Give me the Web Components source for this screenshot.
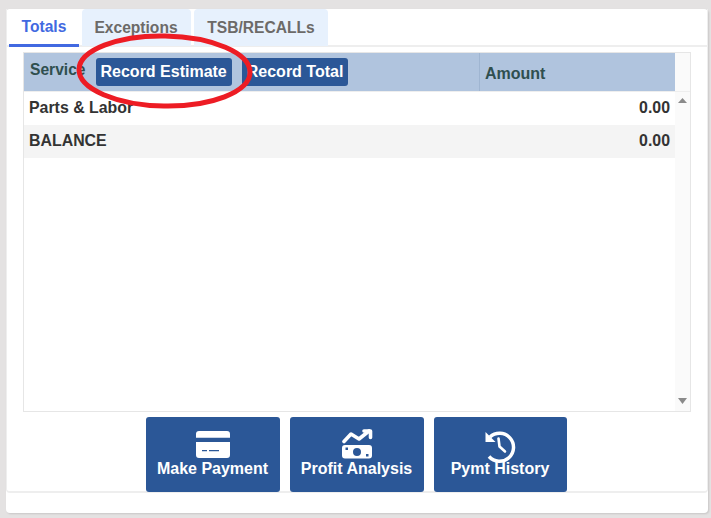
<!DOCTYPE html>
<html><head><meta charset="utf-8"><style>
html,body{margin:0;padding:0;background:#e4e2e2;height:518px;overflow:hidden;font-family:"Liberation Sans",Arial,sans-serif}
</style></head><body>
<app-panel></app-panel>
<script>
function def(name,html){customElements.define(name,class extends HTMLElement{constructor(){super();this.attachShadow({mode:'open'}).innerHTML=html}})}
def('tab-item',`<style>:host{display:flex;align-items:center;justify-content:center;box-sizing:border-box;height:37px;background:#e7f1fd;color:#6c6a68;font:bold 15.6px "Liberation Sans",Arial,sans-serif;border-radius:4px 4px 0 0}
:host([active]){background:#fff;color:#4169e1;border-bottom:3px solid #4169e1;height:38px;border-radius:0}</style><slot></slot>`);
def('tab-bar',`<style>:host{display:flex;gap:3px;padding-left:2px;height:38px;box-sizing:border-box;border-bottom:2px solid #eee}</style><slot></slot>`);
def('rec-button',`<style>:host{display:inline-flex;align-items:center;height:28px;box-sizing:border-box;padding:0 5px;background:#2b5797;color:#fff;font:bold 16px "Liberation Sans",Arial,sans-serif;border-radius:3px;white-space:nowrap}</style><slot></slot>`);
def('grid-head',`<style>:host{display:flex;height:38px;flex:none;border-bottom:1px solid #eee}
.main{flex:none;width:651px;display:grid;grid-template-columns:455px 1fr;background:#b0c4de;color:#2f4f4f;font:bold 15.6px "Liberation Sans",Arial,sans-serif}
.l{display:flex;align-items:center;padding-left:6px;gap:10px}
.l span{position:relative;top:-2px}
.btns{display:flex;gap:10px}
.r{border-left:1px solid #9fb5d1;padding-left:5px;display:flex;align-items:center;padding-top:3px;font-size:16px}
.sb{flex:1;background:#fafafa}</style>
<div class="main"><div class="l"><span>Service</span><div class="btns"><rec-button>Record Estimate</rec-button><rec-button>Record Total</rec-button></div></div><div class="r">Amount</div></div><div class="sb"></div>`);
def('grid-row',`<style>:host{display:flex;justify-content:space-between;align-items:center;box-sizing:border-box;height:33px;padding:0 5px 2px;color:#333;font:bold 15.9px "Liberation Sans",Arial,sans-serif}
:host([alt]){background:#f4f4f4}</style><slot name="k"></slot><slot name="v"></slot>`);
def('scroll-track',`<style>:host{display:flex;flex-direction:column;justify-content:space-between;align-items:center;width:15px;flex:none;background:#fafafa;padding:6px 0 7px;box-sizing:border-box}svg{display:block}</style>
<svg width="9" height="5" viewBox="0 0 9 5"><path d="M4.500 0L9 5H0z" fill="#8a8a8a"/></svg><svg width="9" height="6" viewBox="0 0 9 6"><path d="M0 0H9L4.500 6z" fill="#8a8a8a"/></svg>`);
def('data-grid',`<style>:host{display:flex;flex-direction:column;box-sizing:border-box;height:360px;margin:0 16px;border:1px solid #e6e6e6;background:#fff}
.body{flex:1;display:flex;min-height:0}.rows{flex:1;min-width:0}</style>
<grid-head></grid-head><div class="body"><div class="rows"><slot></slot></div><scroll-track></scroll-track></div>`);
def('action-button',`<style>:host{display:flex;flex-direction:column;align-items:center;box-sizing:border-box;height:75px;background:#2b5797;color:#fff;border-radius:3px;font:bold 16px "Liberation Sans",Arial,sans-serif;padding-top:12px;white-space:nowrap}
::slotted(svg){display:block;height:30px;width:36px;flex:none}
.t{margin-top:-.5px;line-height:20px}</style><slot name="icon"></slot><div class="t"><slot></slot></div>`);
def('action-row',`<style>:host{display:flex;justify-content:center;gap:10px;margin-top:5px;padding-right:2px}</style><slot></slot>`);
def('app-panel',`<style>:host{display:block;position:relative;box-sizing:border-box;width:702px;height:504px;margin:9px 0 0 6px;background:#fff;border-radius:4px;box-shadow:1px 1px 2px rgba(0,0,0,.12)}
.inner{box-sizing:border-box;height:484px;border:solid #eee;border-width:0 1px 2px 1px;border-radius:0 0 4px 4px}
.sp{height:5px}
svg.ring{position:absolute;left:70px;top:22px;overflow:visible}
</style>
<div class="inner"><tab-bar><tab-item active style="width:70px">Totals</tab-item><tab-item style="width:109px;padding-right:1px;box-sizing:border-box">Exceptions</tab-item><tab-item style="width:134px">TSB/RECALLs</tab-item></tab-bar>
<div class="sp"></div>
<data-grid>
<grid-row><span slot="k">Parts &amp; Labor</span><span slot="v">0.00</span></grid-row>
<grid-row alt><span slot="k">BALANCE</span><span slot="v">0.00</span></grid-row>
</data-grid>
<action-row>
<action-button style="width:134px"><svg slot="icon" viewBox="0 0 36 30"><path fill="#fff" d="M1 5a3 3 0 0 1 3-3h28a3 3 0 0 1 3 3v3.700H1zM1 13h34v13a3 3 0 0 1-3 3H4a3 3 0 0 1-3-3z"/><path fill="#2b5797" d="M7 21h5v1.300H7zM14 21h10v1.300H14z"/></svg>Make Payment</action-button>
<action-button style="width:134px"><svg slot="icon" viewBox="0 0 36 30"><path fill="none" stroke="#fff" stroke-width="3.600" stroke-linecap="round" stroke-linejoin="round" d="M5 12.500l7-7.500 8 5 10-8"/><path fill="none" stroke="#fff" stroke-width="3.600" stroke-linecap="round" stroke-linejoin="round" d="M25 2h6.500v6.500"/><path fill-rule="evenodd" fill="#fff" d="M6 16h24a3 3 0 0 1 3 3v7.500a3 3 0 0 1-3 3H6a3 3 0 0 1-3-3V19a3 3 0 0 1 3-3zM18 19a4 4 0 1 0 0 8 4 4 0 0 0 0-8zM6.500 18.500V21H9v-2.500zM27 25v2.500h2.500V25z"/></svg>Profit Analysis</action-button>
<action-button style="width:133px"><svg slot="icon" viewBox="0 0 36 30" style="overflow:visible"><path fill="none" stroke="#fff" stroke-width="3.500" d="M8 8A14 14 0 1 1 7 27.500"/><path fill="#fff" d="M3.500 3v10h10z"/><path fill="none" stroke="#fff" stroke-width="2.600" stroke-linecap="round" stroke-linejoin="round" d="M16.500 9.500l1 8 5.500 5"/></svg>Pymt History</action-button>
</action-row></div>
<svg class="ring" width="180" height="80" viewBox="0 0 180 80"><ellipse cx="88.500" cy="40" rx="85.500" ry="35" fill="none" stroke="#ed1c24" stroke-width="5" transform="rotate(1 88.500 40)"/></svg>`);
</script></body></html>
